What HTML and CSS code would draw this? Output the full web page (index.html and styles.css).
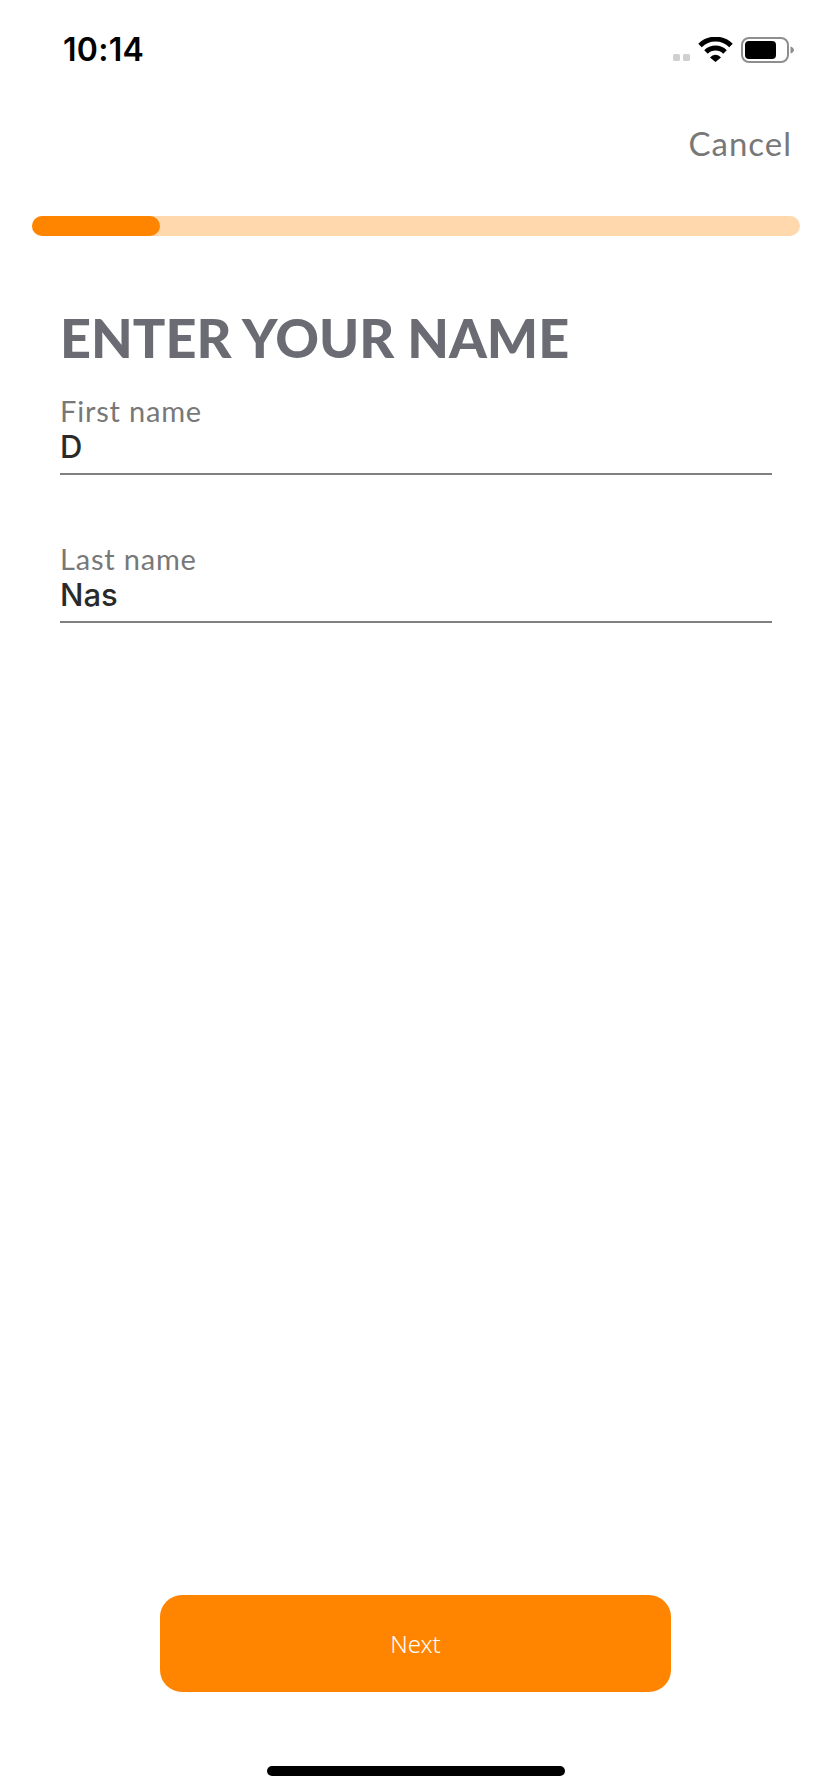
FILE: index.html
```html
<!DOCTYPE html>
<html lang="en">
<head>
    <meta charset="UTF-8">
    <meta name="viewport" content="width=device-width, initial-scale=1.0">
    <title>Enter your name</title>
    <link rel="stylesheet" href="styles.css">
</head>
<body>
    <div class="status-bar">
        <span class="time">10:14</span>
        <svg class="status-icons" width="122" height="26" viewBox="0 0 122 26">
            <rect x="1" y="17" width="7" height="7" rx="1.5" fill="#d0d0d0"/>
            <rect x="11" y="17" width="7" height="7" rx="1.5" fill="#d0d0d0"/>
            <path d="M28 8.500a22 22 0 0 1 31 0" fill="none" stroke="#000" stroke-width="5"/>
            <path d="M34 15a13.500 13.500 0 0 1 19 0" fill="none" stroke="#000" stroke-width="5"/>
            <path d="M38 20.500a7 7 0 0 1 11 0L43.500 25z" fill="#000"/>
            <rect x="70" y="1" width="46" height="24" rx="7" fill="none" stroke="#8e8e8e" stroke-width="2"/>
            <rect x="73" y="4" width="31" height="18" rx="4" fill="#000"/>
            <path d="M118.500 9.500c2 .5 3.500 2 3.500 3.500s-1.500 3-3.500 3.500z" fill="#8e8e8e"/>
        </svg>
    </div>

    <div class="nav">
        <span class="cancel">Cancel</span>
    </div>

    <div class="progress">
        <div class="progress-fill"></div>
    </div>

    <div class="form">
        <h1>ENTER YOUR NAME</h1>
        <div class="field">
            <label>First name</label>
            <div class="value">D</div>
        </div>
        <div class="field">
            <label>Last name</label>
            <div class="value">Nas</div>
        </div>
    </div>

    <button class="next-btn" type="button">Next</button>
    <div class="home-bar"></div>
</body>
</html>
```

FILE: styles.css
```css
body {
    margin: 0;
    height: 100vh;
    display: flex;
    flex-direction: column;
    background-color: #fff;
    font-family: Lato, sans-serif;
    overflow: hidden;
}

.status-bar {
    height: 88px;
    box-sizing: border-box;
    padding: 33px 34px 0 63px;
    display: flex;
    justify-content: space-between;
    align-items: flex-start;
}

.time {
    font-family: Inter, sans-serif;
    font-size: 32px;
    line-height: 34px;
    font-weight: 600;
    letter-spacing: 0.3px;
    color: #000;
}

.status-icons {
    margin-top: 4px;
}

.nav {
    margin-top: 35px;
    padding-right: 36px;
    display: flex;
    justify-content: flex-end;
}

.cancel {
    font-size: 33px;
    line-height: 40px;
    letter-spacing: 1px;
    color: #787878;
}

.progress {
    margin: 53px 28px 0 32px;
    height: 20px;
    border-radius: 10px;
    background-color: #ffd8ae;
}

.progress-fill {
    width: 128px;
    height: 100%;
    border-radius: 10px;
    background-color: #ff8500;
}

.form {
    padding: 0 56px 0 60px;
}

h1 {
    margin: 72px 0 0;
    font-size: 54px;
    line-height: 60px;
    font-weight: 900;
    color: #6a6b73;
}

.field {
    height: 79px;
    border-bottom: 2px solid #808080;
}

h1 + .field {
    margin-top: 26px;
}

.field + .field {
    margin-top: 67px;
}

.field label {
    display: block;
    font-size: 29px;
    line-height: 34px;
    letter-spacing: 0.8px;
    color: #787878;
}

.value {
    margin-top: 1px;
    font-family: Inter, sans-serif;
    font-size: 31px;
    line-height: 36px;
    font-weight: 500;
    color: #2a2a2a;
}

.next-btn {
    margin: auto 0 0 160px;
    width: 511px;
    height: 97px;
    border: none;
    border-radius: 22px;
    background-color: #ff8500;
    color: #fff;
    font-family: "Noto Sans", sans-serif;
    font-size: 24px;
    font-weight: 300;
}

.home-bar {
    margin: 74px 0 16px 267px;
    width: 298px;
    height: 10px;
    border-radius: 5px;
    background-color: #000;
}
```
